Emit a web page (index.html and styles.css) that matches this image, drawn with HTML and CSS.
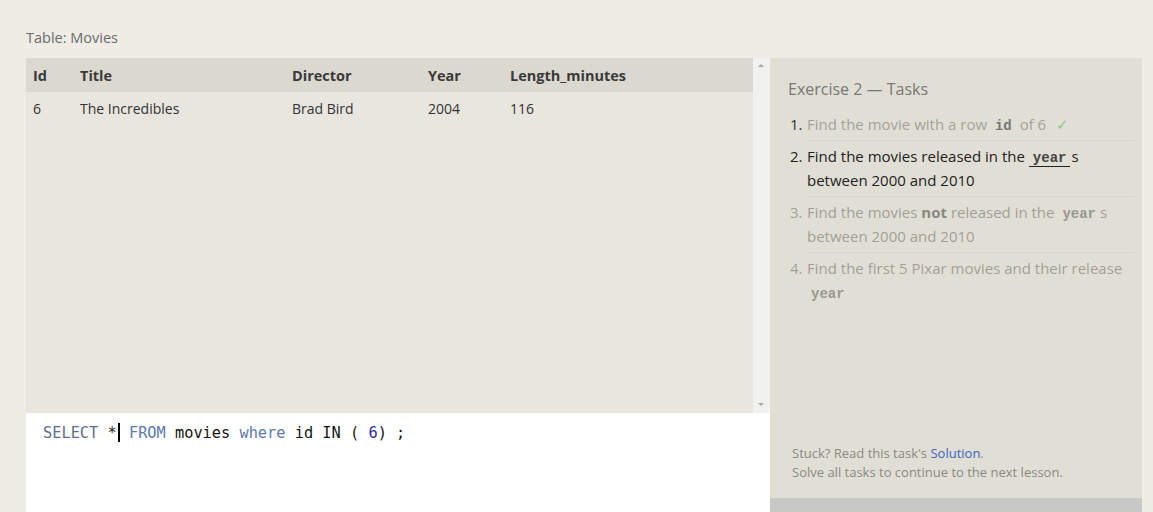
FILE: index.html
```html
<!DOCTYPE html>
<html>
<head>
<meta charset="utf-8">
<link rel="stylesheet" href="styles.css">
</head>
<body>
<div class="page">
  <div class="table-label">Table: Movies</div>
  <div class="workspace">
    <div class="left">
      <div class="results">
        <div class="table-wrap">
          <table class="data">
            <thead>
              <tr><th class="c-id">Id</th><th class="c-title">Title</th><th class="c-dir">Director</th><th class="c-year">Year</th><th>Length_minutes</th></tr>
            </thead>
            <tbody>
              <tr><td>6</td><td>The Incredibles</td><td>Brad Bird</td><td>2004</td><td>116</td></tr>
            </tbody>
          </table>
        </div>
        <div class="scrollbar">
          <span class="arrow up"></span>
          <span class="arrow down"></span>
        </div>
      </div>
      <div class="editor">
        <code class="sql"><span class="kw1">SELECT</span> <span class="op">*</span><span class="caret"></span> <span class="kw2">FROM</span> movies <span class="kw2">where</span> id IN ( <span class="num">6</span>) ;</code>
      </div>
    </div>
    <div class="right">
      <div class="tasks">
        <div class="tasks-title">Exercise 2 — Tasks</div>
        <ol class="task-list">
          <li class="task done"><span class="n">1.</span><span class="t">Find the movie with a row <code>id</code> of 6 <span class="check">✓</span></span></li>
          <li class="task active"><span class="n">2.</span><span class="t">Find the movies released in the <code class="ul">year</code>s between 2000 and 2010</span></li>
          <li class="task todo"><span class="n">3.</span><span class="t">Find the movies <b>not</b> released in the <code>year</code>s between 2000 and 2010</span></li>
          <li class="task todo"><span class="n">4.</span><span class="t">Find the first 5 Pixar movies and their release <code>year</code></span></li>
        </ol>
        <div class="help">
          <div>Stuck? Read this task's <a class="sol">Solution</a>.</div>
          <div>Solve all tasks to continue to the next lesson.</div>
        </div>
      </div>
      <div class="footer-strip"></div>
    </div>
  </div>
</div>
</body>
</html>
```
FILE: styles.css
```css
html, body {
  margin: 0;
  padding: 0;
  background: #efece6;
  font-family: "Open Sans", "Noto Sans", sans-serif;
  overflow: hidden;
}
.page {
  padding: 28px 11px 0 26px;
}
.table-label {
  font-size: 14.5px;
  color: #6b6b6b;
  height: 30px;
  line-height: 20px;
}
.workspace {
  display: flex;
  width: 1116px;
}
.left {
  width: 744px;
  display: flex;
  flex-direction: column;
}
.results {
  display: flex;
  height: 355px;
  background: #e8e6df;
}
.table-wrap {
  flex: 1;
}
.data {
  border-collapse: collapse;
  width: 100%;
  font-size: 14px;
  color: #333;
}
.data th {
  background: #dbd9cf;
  text-align: left;
  font-weight: 700;
  height: 34px;
  padding: 0 0 0 7px;
  font-size: 14.5px;
  color: #3a3a3a;
}
.data td {
  padding: 0 0 0 7px;
  height: 32px;
  color: #333;
}
.c-id { width: 40px; }
.c-title { width: 205px; }
.c-dir { width: 129px; }
.c-year { width: 75px; }
.scrollbar {
  width: 17px;
  background: #f1f1f0;
  position: relative;
}
.arrow {
  position: absolute;
  left: 5px;
  width: 0;
  height: 0;
  border-left: 3px solid transparent;
  border-right: 3px solid transparent;
}
.arrow.up {
  top: 6px;
  border-bottom: 3px solid #a8a8a8;
}
.arrow.down {
  bottom: 7px;
  border-top: 3px solid #a8a8a8;
}
.editor {
  background: #fff;
  height: 120px;
  padding: 8px 0 0 17px;
  box-sizing: border-box;
}
.sql {
  font-family: "DejaVu Sans Mono", "Liberation Mono", monospace;
  font-size: 15.3px;
  color: #141414;
  white-space: pre;
  line-height: 20px;
}
.kw1 { color: #5f6e8e; }
.kw2 { color: #5d7ab2; }
.op { color: #222; }
.num { color: #2b2fa0; }
.caret {
  display: inline-block;
  width: 2px;
  height: 19px;
  background: #000;
  vertical-align: -4px;
  margin-left: 1px;
}
.right {
  width: 372px;
  display: flex;
  flex-direction: column;
}
.tasks {
  background: #e1dfd5;
  height: 440px;
  padding: 20px 7px 0 18px;
  box-sizing: border-box;
  display: flex;
  flex-direction: column;
}
.tasks-title {
  font-size: 16px;
  color: #777;
  line-height: 22px;
  margin-bottom: 8px;
}
.task-list {
  list-style: none;
  margin: 0;
  padding: 0;
  font-size: 15px;
  line-height: 24px;
}
.task {
  display: flex;
  padding: 3px 0 4px 0;
}
.task.done {
  padding-top: 4px;
}
.task + .task {
  border-top: 1px solid #d8d5ca;
  margin-left: 19px;
}
.task + .task .n {
  margin-left: -17px;
}
.n {
  width: 17px;
  flex: none;
  margin-left: 2px;
}
.t {
  flex: 1;
}
.task code {
  font-family: "Liberation Mono", "DejaVu Sans Mono", monospace;
  font-weight: 700;
  font-size: 14px;
  line-height: 1;
  margin: 0 4px;
}
.task code.ul {
  margin: 0 1px 0 0;
  padding: 0 4px;
}
.done .n { color: #333; }
.done .t { color: #a3a39b; }
.done code { color: #777; }
.check { color: #8acb8a; margin-left: 6px; }
.active { color: #222; }
.active code { color: #444; }
.ul { border-bottom: 1.5px solid #222; }
.todo { color: #a19f97; }
.todo b { color: #8a8883; }
.todo code { color: #9a9891; }
.help {
  margin-top: auto;
  margin-bottom: 16px;
  padding-left: 4px;
  font-size: 13px;
  line-height: 19px;
  color: #8a8883;
}
.sol { color: #3b63c4; }
.footer-strip {
  height: 40px;
  background: #c8c8c6;
}
```
